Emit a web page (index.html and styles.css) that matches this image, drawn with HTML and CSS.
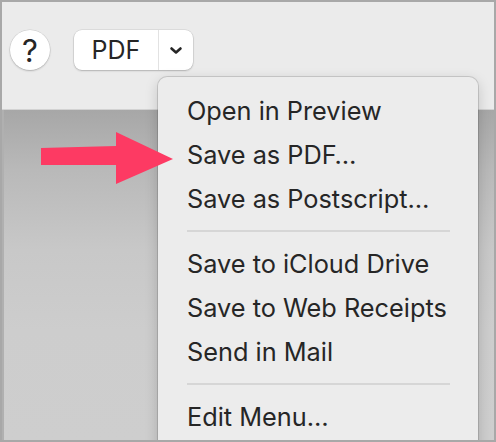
FILE: index.html
```html
<!DOCTYPE html>
<html>
<head>
<meta charset="utf-8">
<link rel="stylesheet" href="styles.css">
</head>
<body>
<div class="frame">
  <div class="toolbar">
    <div class="help">?</div>
    <div class="pdf">
      <span class="pdf-label">PDF</span>
      <span class="pdf-arrow">
        <svg width="14" height="9" viewBox="0 0 14 9"><path d="M2.5 2.5 L7 6.5 L11.5 2.5" fill="none" stroke="#262626" stroke-width="2.6" stroke-linecap="round" stroke-linejoin="round"/></svg>
      </span>
    </div>
  </div>
  <div class="content"></div>
  <div class="menu">
    <div class="item">Open in Preview</div>
    <div class="item">Save as PDF…</div>
    <div class="item">Save as Postscript…</div>
    <div class="sep"></div>
    <div class="item">Save to iCloud Drive</div>
    <div class="item">Save to Web Receipts</div>
    <div class="item">Send in Mail</div>
    <div class="sep"></div>
    <div class="item">Edit Menu…</div>
  </div>
  <svg class="arrow" width="180" height="60" viewBox="0 0 180 60">
    <polygon points="41,18 116,16 116,2 173,29 116,54 116,35 41,35" fill="#fd3a63"/>
  </svg>
</div>
</body>
</html>
```
FILE: styles.css
```css
html, body {
  margin: 0;
  padding: 0;
  background: #a8a8a8;
}
.frame {
  position: relative;
  width: 496px;
  height: 442px;
  box-sizing: border-box;
  border: 2px solid #a8a8a8;
  overflow: hidden;
  display: flex;
  flex-direction: column;
  font-family: Inter, "Liberation Sans", sans-serif;
  color: #262626;
}
.toolbar {
  flex: none;
  background: #ebebeb;
  border-bottom: 1px solid #d2d2d2;
  display: flex;
  align-items: flex-start;
  padding: 28px 0 0 8px;
  box-sizing: border-box;
  height: 108px;
  gap: 24px;
}
.help {
  width: 40px;
  height: 40px;
  border-radius: 50%;
  background: #fff;
  box-shadow: 0 0 0 0.5px rgba(0,0,0,0.12), 0 1px 2px rgba(0,0,0,0.2);
  display: flex;
  align-items: center;
  justify-content: center;
  font-size: 31px;
  line-height: 1;
  padding-top: 1px;
  box-sizing: border-box;
}
.pdf {
  width: 119px;
  height: 40px;
  border-radius: 8px;
  background: #fff;
  box-shadow: 0 0 0 0.5px rgba(0,0,0,0.12), 0 1px 2px rgba(0,0,0,0.2);
  display: flex;
  align-items: stretch;
}
.pdf-label {
  width: 84px;
  border-right: 1px solid #e2e2e2;
  display: flex;
  align-items: center;
  justify-content: center;
  font-size: 25px;
}
.pdf-arrow {
  flex: 1;
  display: flex;
  align-items: center;
  justify-content: center;
}
.content {
  flex: 1;
  background: linear-gradient(#a7a7a7 0px, #b9b9b9 60px, #c8c8c8 140px, #cdcdcd 220px, #cecece 330px);
  box-shadow: inset 2px 0 0 #b0b0b0;
}
.menu {
  position: absolute;
  left: 156px;
  top: 75px;
  width: 320px;
  bottom: -20px;
  background: #ececec;
  border-radius: 9px;
  box-shadow: 0 0 0 1px rgba(0,0,0,0.13), 0 4px 14px rgba(0,0,0,0.18);
  padding: 12px 28px 0 29px;
  box-sizing: border-box;
  font-size: 25.3px;
}
.item {
  height: 44px;
  line-height: 44px;
  white-space: nowrap;
}
.sep {
  height: 2px;
  background: #d6d6d6;
  margin: 9px 0 10px;
}
.arrow {
  position: absolute;
  left: -2px;
  top: 128px;
}
```
